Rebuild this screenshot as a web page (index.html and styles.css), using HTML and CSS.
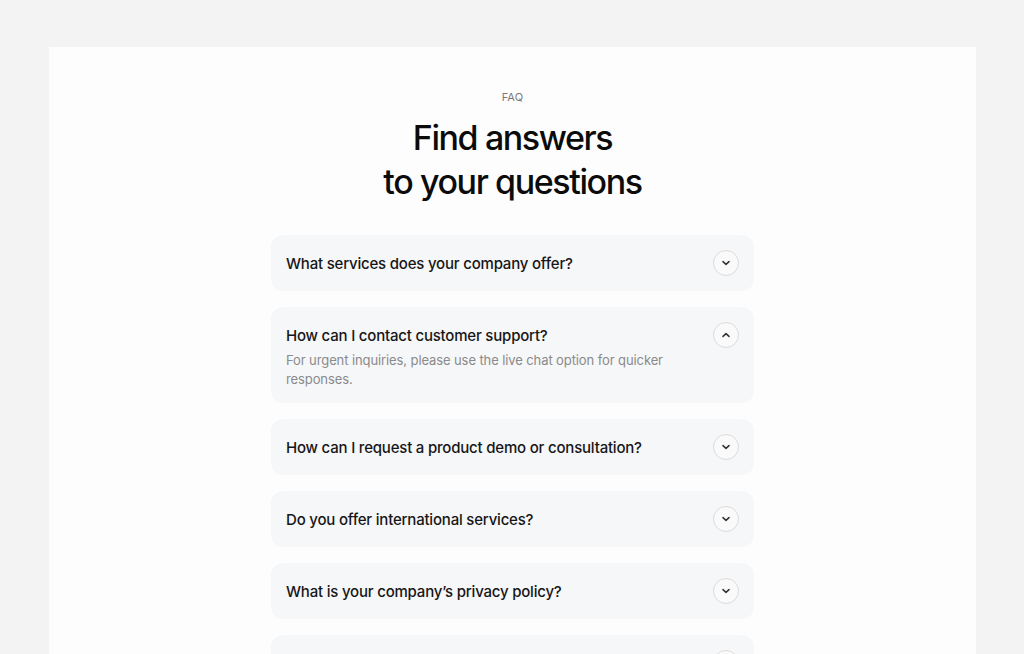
FILE: index.html
```html
<!DOCTYPE html>
<html lang="en">
<head>
<meta charset="utf-8">
<title>FAQ</title>
<link rel="stylesheet" href="styles.css">
</head>
<body>
<main class="card">
  <p class="eyebrow">FAQ</p>
  <h1 class="title">Find answers<br>to your questions</h1>
  <ul class="faq">
    <li class="item">
      <div class="head"><span class="q">What services does your company offer?</span><span class="toggle"><svg viewBox="0 0 12 12" width="12" height="12"><path d="M3 4.6l3 2.8 3-2.8"/></svg></span></div>
    </li>
    <li class="item open">
      <div class="head"><span class="q">How can I contact customer support?</span><span class="toggle"><svg viewBox="0 0 12 12" width="12" height="12"><path d="M3 7.4l3-2.8 3 2.8"/></svg></span></div>
      <p class="a">For urgent inquiries, please use the live chat option for quicker responses.</p>
    </li>
    <li class="item">
      <div class="head"><span class="q">How can I request a product demo or consultation?</span><span class="toggle"><svg viewBox="0 0 12 12" width="12" height="12"><path d="M3 4.6l3 2.8 3-2.8"/></svg></span></div>
    </li>
    <li class="item">
      <div class="head"><span class="q">Do you offer international services?</span><span class="toggle"><svg viewBox="0 0 12 12" width="12" height="12"><path d="M3 4.6l3 2.8 3-2.8"/></svg></span></div>
    </li>
    <li class="item">
      <div class="head"><span class="q">What is your company’s privacy policy?</span><span class="toggle"><svg viewBox="0 0 12 12" width="12" height="12"><path d="M3 4.6l3 2.8 3-2.8"/></svg></span></div>
    </li>
    <li class="item">
      <div class="head"><span class="q">Are there any discounts for long-term contracts?</span><span class="toggle"><svg viewBox="0 0 12 12" width="12" height="12"><path d="M3 4.6l3 2.8 3-2.8"/></svg></span></div>
    </li>
  </ul>
</main>
</body>
</html>
```
FILE: styles.css
```css
* { box-sizing: border-box; }
html, body { margin: 0; padding: 0; }
body {
  background: #f3f3f3;
  font-family: Inter, "Noto Sans", sans-serif;
  color: #111;
  padding: 47px 48px 0 49px;
  height: 654px;
  overflow: hidden;
}
.card {
  background: #fdfdfd;
  min-height: 700px;
  padding-top: 42px;
  display: flex;
  flex-direction: column;
  align-items: center;
}
.eyebrow {
  margin: 0;
  font-size: 11px;
  line-height: 16px;
  color: #7a7a7a;
  letter-spacing: 0.2px;
}
.title {
  margin: 11px 0 0;
  font-size: 34px;
  line-height: 44px;
  font-weight: 500;
  letter-spacing: -1.4px;
  text-align: center;
  color: #0b0b0b;
}
.faq {
  list-style: none;
  margin: 31px 0 0;
  padding: 0;
  width: 483px;
  display: flex;
  flex-direction: column;
  gap: 16px;
}
.item {
  background: #f6f7f9;
  border-radius: 12px;
  padding: 15px;
}
.item.open {
  padding-bottom: 14px;
}
.head {
  display: flex;
  align-items: center;
  justify-content: space-between;
  height: 26px;
}
.q {
  font-size: 15px;
  font-weight: 500;
  letter-spacing: -0.2px;
  color: #161616;
}
.toggle {
  width: 26px;
  height: 26px;
  border-radius: 50%;
  border: 1px solid #dcdcdc;
  background: #fafafa;
  display: flex;
  align-items: center;
  justify-content: center;
}
.toggle svg path {
  fill: none;
  stroke: #333;
  stroke-width: 1.5;
  stroke-linecap: round;
  stroke-linejoin: round;
}
.a {
  margin: 3px 0 0;
  max-width: 390px;
  font-size: 13px;
  line-height: 19px;
  color: #8a8a8a;
  letter-spacing: -0.1px;
}
```
